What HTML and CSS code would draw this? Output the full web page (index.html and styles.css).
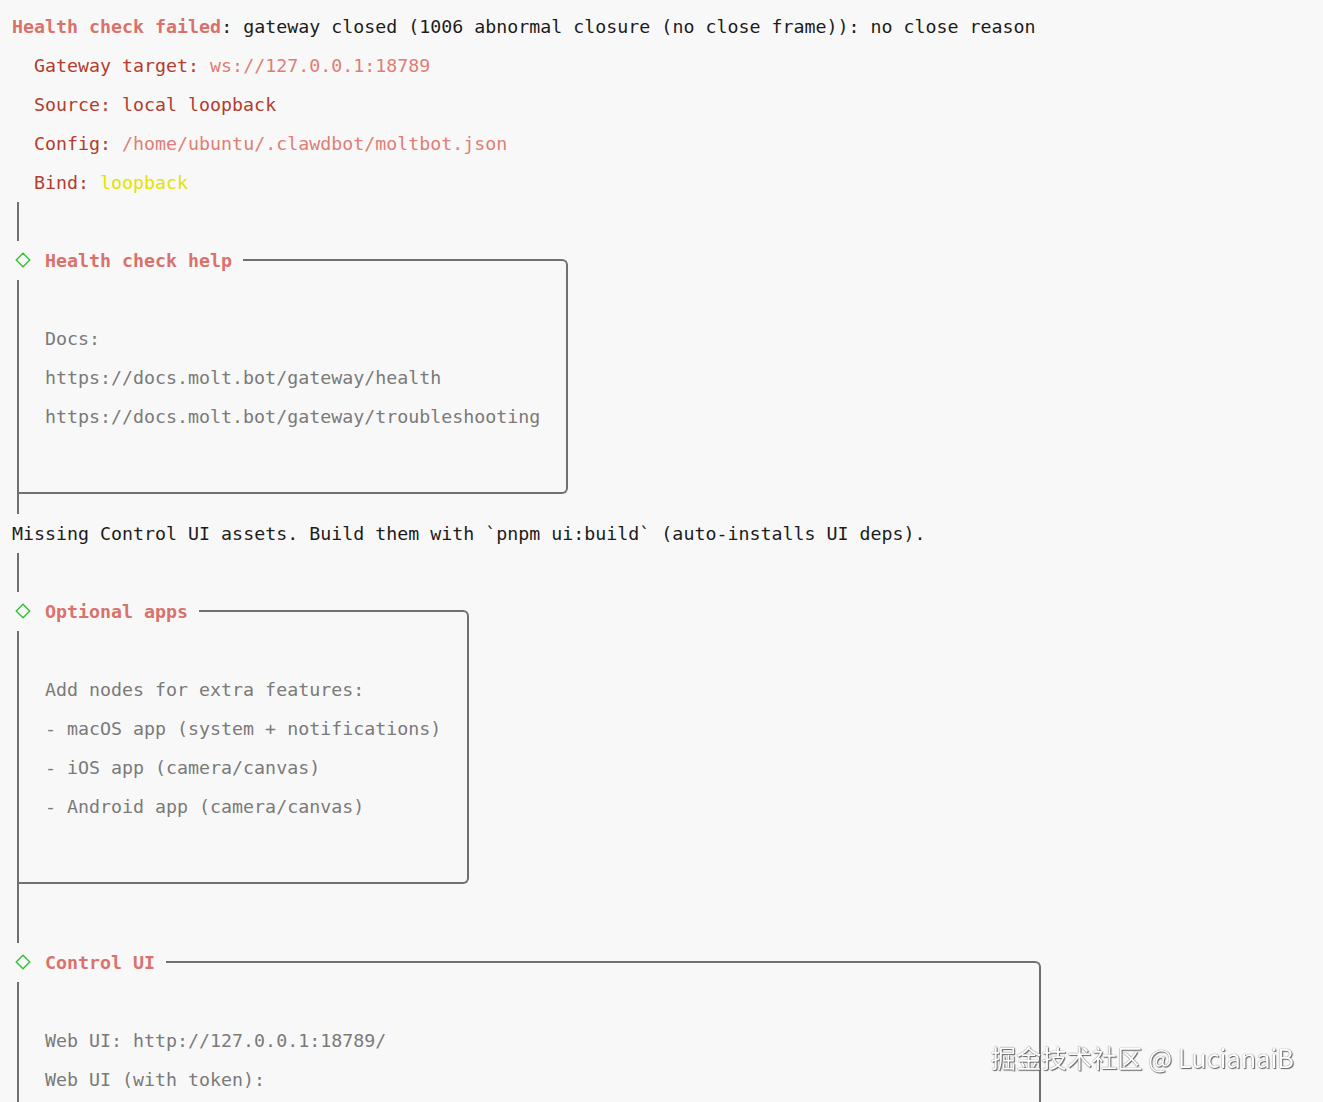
FILE: index.html
```html
<!DOCTYPE html>
<html lang="en">
<head>
<meta charset="utf-8">
<title>moltbot doctor</title>
<link rel="stylesheet" href="styles.css">
</head>
<body>
<main class="term">
  <div class="line"><span class="err">Health check failed</span>: gateway closed (1006 abnormal closure (no close frame)): no close reason</div>
  <div class="line ind"><span class="lbl">Gateway target:</span> <span class="val">ws://127.0.0.1:18789</span></div>
  <div class="line ind"><span class="lbl">Source: local loopback</span></div>
  <div class="line ind"><span class="lbl">Config:</span> <span class="val">/home/ubuntu/.clawdbot/moltbot.json</span></div>
  <div class="line ind"><span class="lbl">Bind:</span> <span class="warn">loopback</span></div>
  <div class="bar"></div>

  <section class="note">
    <div class="note-head">
      <span class="diamond"><svg width="16" height="16" viewBox="0 0 16 16"><path d="M8 1.2 L14.8 8 L8 14.8 L1.2 8 Z" fill="none" stroke="#2cbf2c" stroke-width="1.3"/></svg></span>
      <span class="note-title">Health check help</span>
      <span class="note-rule"></span>
    </div>
    <div class="note-body">
      <div class="line"></div>
      <div class="line">Docs:</div>
      <div class="line">https://docs.molt.bot/gateway/health</div>
      <div class="line">https://docs.molt.bot/gateway/troubleshooting</div>
      <div class="line"></div>
    </div>
    <div class="note-tail"></div>
  </section>

  <div class="line">Missing Control UI assets. Build them with `pnpm ui:build` (auto-installs UI deps).</div>
  <div class="bar"></div>

  <section class="note">
    <div class="note-head">
      <span class="diamond"><svg width="16" height="16" viewBox="0 0 16 16"><path d="M8 1.2 L14.8 8 L8 14.8 L1.2 8 Z" fill="none" stroke="#2cbf2c" stroke-width="1.3"/></svg></span>
      <span class="note-title">Optional apps</span>
      <span class="note-rule"></span>
    </div>
    <div class="note-body">
      <div class="line"></div>
      <div class="line">Add nodes for extra features:</div>
      <div class="line">- macOS app (system + notifications)</div>
      <div class="line">- iOS app (camera/canvas)</div>
      <div class="line">- Android app (camera/canvas)</div>
      <div class="line"></div>
    </div>
    <div class="note-tail"></div>
  </section>
  <div class="bar"></div>

  <section class="note note-wide">
    <div class="note-head">
      <span class="diamond"><svg width="16" height="16" viewBox="0 0 16 16"><path d="M8 1.2 L14.8 8 L8 14.8 L1.2 8 Z" fill="none" stroke="#2cbf2c" stroke-width="1.3"/></svg></span>
      <span class="note-title">Control UI</span>
      <span class="note-rule"></span>
    </div>
    <div class="note-body">
      <div class="line"></div>
      <div class="line">Web UI: http://127.0.0.1:18789/</div>
      <div class="line">Web UI (with token):</div>
      <div class="line"></div>
      <div class="line"></div>
    </div>
    <div class="note-tail"></div>
  </section>
</main>
<div class="watermark">掘金技术社区 @ LucianaiB</div>
</body>
</html>
```

FILE: styles.css
```css
html {
  overflow: hidden;
  background: #f8f8f8;
}

body {
  margin: 0;
  background: #f8f8f8;
  color: #1c1c1c;
  font-family: "DejaVu Sans Mono", "Liberation Mono", monospace;
  font-size: 18.3px;
}

.term {
  padding: 7px 0 0 12px;
  display: flex;
  flex-direction: column;
  align-items: flex-start;
}

.line {
  height: 39px;
  line-height: 39px;
  white-space: pre;
}

.ind {
  padding-left: 22px;
}

.err {
  color: #d9726c;
  font-weight: bold;
}

.lbl {
  color: #b23c2e;
}

.val {
  color: #e07d75;
}

.warn {
  color: #e2e200;
}

.bar {
  height: 39px;
  margin-left: 5px;
  border-left: 2px solid #707070;
}

.note {
  display: flex;
  flex-direction: column;
  width: max-content;
}

.note-wide {
  width: 1029px;
}

.note-head {
  display: flex;
  height: 39px;
  align-items: center;
}

.diamond {
  width: 33px;
  height: 39px;
  display: flex;
  align-items: center;
}

.diamond svg {
  margin-left: 3px;
  margin-top: -1px;
}

.note-title {
  color: #d9726c;
  font-weight: bold;
  line-height: 39px;
  white-space: pre;
}

.note-rule {
  flex: 1;
  align-self: flex-end;
  height: 19px;
  margin-left: 11px;
  border-top: 2px solid #707070;
  border-right: 2px solid #707070;
  border-top-right-radius: 6px;
}

.note-body {
  margin-left: 5px;
  padding: 0 26px 17px 26px;
  border-left: 2px solid #707070;
  border-right: 2px solid #707070;
  border-bottom: 2px solid #707070;
  border-bottom-right-radius: 6px;
  color: #7a7a7a;
}

.note-tail {
  height: 20px;
  margin-left: 5px;
  border-left: 2px solid #707070;
}

.watermark {
  position: fixed;
  right: 29px;
  bottom: 27px;
  font-family: "Noto Sans CJK SC", "Noto Sans", sans-serif;
  font-size: 25.3px;
  color: #ffffff;
  text-shadow: 0 0 1px #444, 1px 1px 1px #666;
  white-space: pre;
}
```
